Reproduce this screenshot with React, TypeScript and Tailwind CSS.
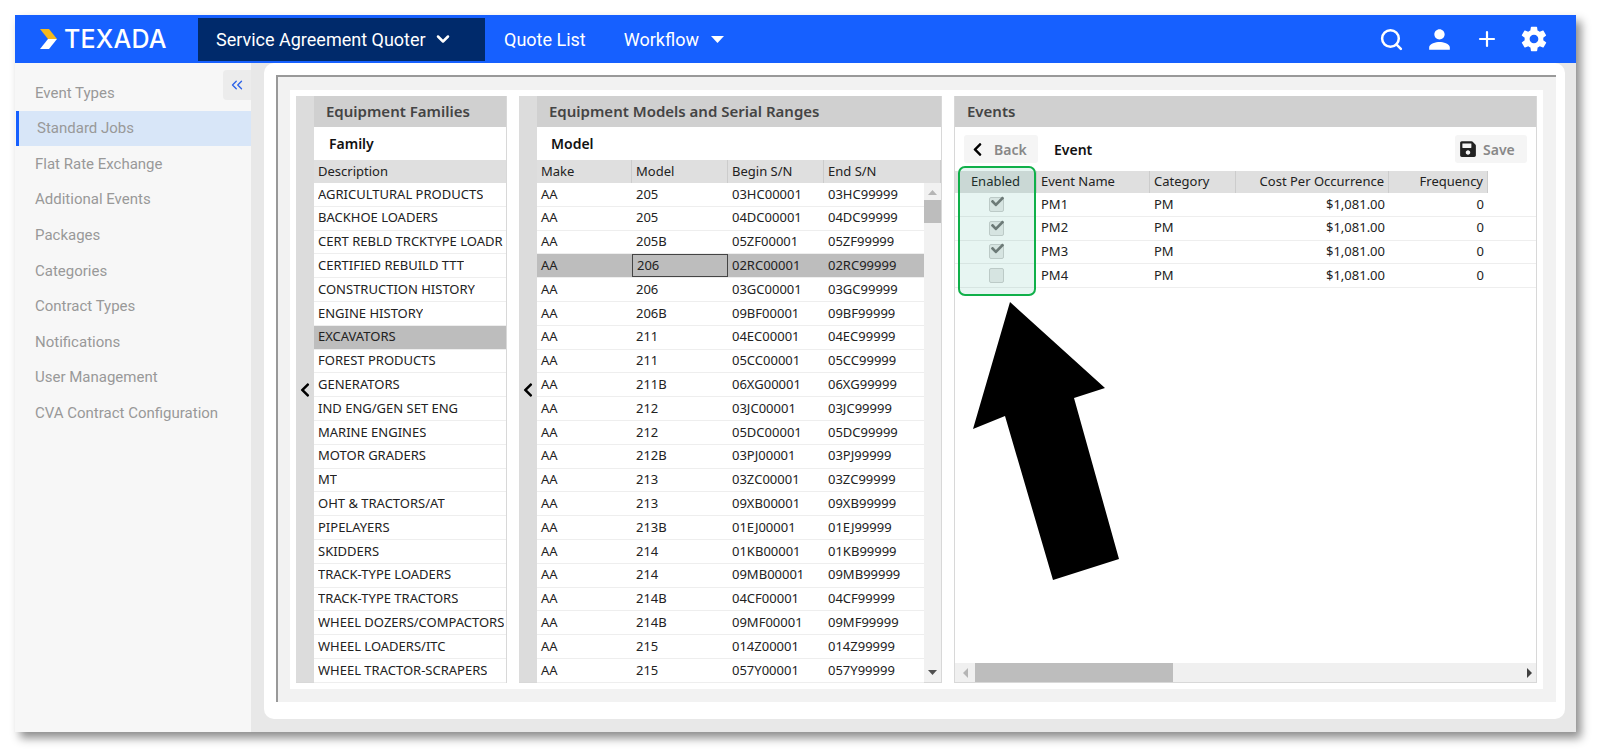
import React from 'react';
import { ChevronDown, ChevronsLeft, Plus, Search } from 'lucide-react';
import { FaCheck, FaChevronLeft, FaSave } from 'react-icons/fa';
import { IoMdSettings } from 'react-icons/io';
import { MdPerson } from 'react-icons/md';

const sideItems = [
  'Event Types',
  'Standard Jobs',
  'Flat Rate Exchange',
  'Additional Events',
  'Packages',
  'Categories',
  'Contract Types',
  'Notifications',
  'User Management',
  'CVA Contract Configuration',
];

const families = [
  'AGRICULTURAL PRODUCTS',
  'BACKHOE LOADERS',
  'CERT REBLD TRCKTYPE LOADR',
  'CERTIFIED REBUILD TTT',
  'CONSTRUCTION HISTORY',
  'ENGINE HISTORY',
  'EXCAVATORS',
  'FOREST PRODUCTS',
  'GENERATORS',
  'IND ENG/GEN SET ENG',
  'MARINE ENGINES',
  'MOTOR GRADERS',
  'MT',
  'OHT & TRACTORS/AT',
  'PIPELAYERS',
  'SKIDDERS',
  'TRACK-TYPE LOADERS',
  'TRACK-TYPE TRACTORS',
  'WHEEL DOZERS/COMPACTORS',
  'WHEEL LOADERS/ITC',
  'WHEEL TRACTOR-SCRAPERS',
];

const models = [
  ['205', '03HC'],
  ['205', '04DC'],
  ['205B', '05ZF'],
  ['206', '02RC'],
  ['206', '03GC'],
  ['206B', '09BF'],
  ['211', '04EC'],
  ['211', '05CC'],
  ['211B', '06XG'],
  ['212', '03JC'],
  ['212', '05DC'],
  ['212B', '03PJ'],
  ['213', '03ZC'],
  ['213', '09XB'],
  ['213B', '01EJ'],
  ['214', '01KB'],
  ['214', '09MB'],
  ['214B', '04CF'],
  ['214B', '09MF'],
  ['215', '014Z'],
  ['215', '057Y'],
];

const events = [
  { name: 'PM1', on: true },
  { name: 'PM2', on: true },
  { name: 'PM3', on: true },
  { name: 'PM4', on: false },
];

const Gutter = () => (
  <div className="w-[18px] shrink-0 bg-[#dcdcdc] flex items-center justify-center pt-[2px]">
    <FaChevronLeft className="h-[16px] w-[16px] text-black" />
  </div>
);

const PanelTitle = ({ children }: { children: React.ReactNode }) => (
  <div className="h-[31px] shrink-0 bg-[#d0d0d0] flex items-center text-[15px] font-semibold text-[#444444]">
    {children}
  </div>
);

const App: React.FC = () => {
  return (
    <div className="relative w-[1600px] h-[755px] bg-white overflow-hidden font-['Noto_Sans',sans-serif]">
      <div className="absolute left-[15px] top-[15px] w-[1561px] h-[717px] flex flex-col shadow-[5px_6px_9px_rgba(0,0,0,0.45)]">
        {/* Header */}
        <div className="h-[48px] shrink-0 bg-[#1660ff] flex items-center text-white font-['Roboto',sans-serif]">
          <div className="w-[183px] shrink-0 flex items-center pl-[25px] gap-[5px]">
            <svg width="19" height="20" viewBox="0 0 19 20">
              <path d="M0 0H9L17 10H8Z" fill="#f5b81c" />
              <path d="M8 10H17L9 20H0Z" fill="#ffffff" />
            </svg>
            <span className="text-[25px] font-medium leading-none font-['Inter',sans-serif] tracking-[0.2px]">TEXADA</span>
          </div>
          <div className="h-[43px] w-[287px] shrink-0 bg-[#002a6b] flex items-center pl-[18px] gap-[7px] text-[18px]">
            Service Agreement Quoter
            <ChevronDown className="h-[20px] w-[20px]" strokeWidth={3} />
          </div>
          <div className="ml-[19px] text-[18px]">Quote List</div>
          <div className="ml-[38px] text-[18px] flex items-center gap-[12px]">
            Workflow
            <svg width="13" height="7" viewBox="0 0 13 7">
              <path d="M0 0H13L6.5 7Z" fill="#ffffff" />
            </svg>
          </div>
          <div className="ml-auto flex items-center mr-[27px] gap-[20px]">
            <Search className="h-[25px] w-[25px]" strokeWidth={2.4} />
            <MdPerson className="h-[31px] w-[31px]" />
            <Plus className="h-[24px] w-[24px]" strokeWidth={2.2} />
            <IoMdSettings className="h-[30px] w-[30px]" />
          </div>
        </div>

        <div className="flex-1 flex min-h-0">
          {/* Sidebar */}
          <div className="relative w-[236px] shrink-0 bg-[#f7f7f7] pt-[12px] font-['Roboto',sans-serif] text-[15px] text-[#999999]">
            <button className="absolute right-0 top-[7px] w-[28px] h-[30px] rounded-l-[4px] bg-[#ececec] flex items-center justify-center">
              <ChevronsLeft className="h-[18px] w-[18px] text-[#2c62e8]" strokeWidth={1.8} />
            </button>
            {sideItems.map((item) =>
              item === 'Standard Jobs' ? (
                <div
                  key={item}
                  className="h-[35.6px] ml-[1px] border-l-[3px] border-[#1660ff] bg-[#d8e6f8] flex items-center pl-[18px]"
                >
                  {item}
                </div>
              ) : (
                <div key={item} className="h-[35.6px] flex items-center pl-[20px]">
                  {item}
                </div>
              ),
            )}
          </div>

          {/* Main */}
          <div className="flex-1 min-w-0 bg-[#e8e8e8] pl-[13px] pr-[11px] pb-[13px]">
            <div className="h-full rounded-[10px] bg-white pl-[12px] pr-[9px] pt-[12px] pb-[17px]">
              <div className="h-full border-t-2 border-l-2 border-[#999999] bg-[#f2f2f2] pl-[12px] pr-[13px] pt-[13px] pb-[13px]">
                <div className="h-full bg-white p-[6px] flex gap-[12px] text-[13px] text-[#222222]">
                  {/* Families */}
                  <div className="w-[211px] shrink-0 flex border-b border-r border-[#d8d8d8]">
                    <Gutter />
                    <div className="flex-1 min-w-0 flex flex-col">
                      <PanelTitle>
                        <span className="pl-[12px]">Equipment Families</span>
                      </PanelTitle>
                      <div className="h-[33px] shrink-0 flex items-center pl-[15px] text-[14px] font-semibold text-[#111111]">Family</div>
                      <div className="h-[23px] shrink-0 bg-[#dfdfdf] flex items-center pl-[4px]">Description</div>
                      {families.map((f) => (
                        <div
                          key={f}
                          className={`h-[23.8px] shrink-0 flex items-center pl-[4px] border-b border-[#eeeeee] ${f === 'EXCAVATORS' ? 'bg-[#bdbdbd]' : ''}`}
                        >
                          <span className="truncate">{f}</span>
                        </div>
                      ))}
                    </div>
                  </div>

                  {/* Models */}
                  <div className="w-[423px] shrink-0 flex border-b border-r border-[#d8d8d8]">
                    <Gutter />
                    <div className="flex-1 min-w-0 flex flex-col">
                      <PanelTitle>
                        <span className="pl-[12px]">Equipment Models and Serial Ranges</span>
                      </PanelTitle>
                      <div className="h-[33px] shrink-0 flex items-center pl-[14px] text-[14px] font-semibold text-[#111111]">Model</div>
                      <div className="h-[23px] shrink-0 bg-[#dfdfdf] grid grid-cols-[95px_96px_96px_1fr] items-stretch">
                        {['Make', 'Model', 'Begin S/N', 'End S/N'].map((h) => (
                          <div key={h} className="flex items-center pl-[4px] border-r border-[#cccccc]">{h}</div>
                        ))}
                      </div>
                      <div className="flex-1 min-h-0 flex">
                        <div className="flex-1 min-w-0">
                          {models.map(([model, serial], i) => (
                            <div
                              key={i}
                              className={`h-[23.8px] grid grid-cols-[95px_96px_96px_1fr] items-stretch border-b border-[#eeeeee] ${i === 3 ? 'bg-[#bdbdbd]' : ''}`}
                            >
                              <div className="flex items-center pl-[4px]">AA</div>
                              <div className={`flex items-center pl-[4px] ${i === 3 ? 'border border-[#444444]' : ''}`}>{model}</div>
                              <div className="flex items-center pl-[4px]">{serial}00001</div>
                              <div className="flex items-center pl-[4px]">{serial}99999</div>
                            </div>
                          ))}
                        </div>
                        <div className="w-[17px] shrink-0 bg-[#f1f1f1] flex flex-col items-center">
                          <svg className="mt-[7px]" width="9" height="5" viewBox="0 0 9 5"><path d="M0 5H9L4.5 0Z" fill="#b5b5b5" /></svg>
                          <div className="mt-[5px] w-full h-[23px] bg-[#bdbdbd]" />
                          <svg className="mt-auto mb-[7px]" width="9" height="5" viewBox="0 0 9 5"><path d="M0 0H9L4.5 5Z" fill="#505050" /></svg>
                        </div>
                      </div>
                    </div>
                  </div>

                  {/* Events */}
                  <div className="flex-1 min-w-0 flex flex-col border border-t-0 border-[#d8d8d8]">
                    <PanelTitle>
                      <span className="pl-[12px]">Events</span>
                    </PanelTitle>
                    <div className="h-[44px] shrink-0 flex items-center pl-[9px] pr-[9px]">
                      <div className="h-[28px] w-[74px] rounded-[3px] bg-[#f5f5f5] flex items-center pl-[6px] gap-[9px] text-[14px] font-semibold text-[#888888]">
                        <FaChevronLeft className="h-[15px] w-[15px] text-black" />
                        Back
                      </div>
                      <div className="ml-[16px] text-[14px] font-semibold text-[#111111]">Event</div>
                      <div className="ml-auto h-[28px] w-[72px] rounded-[3px] bg-[#f5f5f5] flex items-center pl-[4px] gap-[6px] text-[14px] font-semibold text-[#888888]">
                        <FaSave className="h-[18px] w-[18px] text-[#222222]" />
                        Save
                      </div>
                    </div>
                    <div className="h-[22px] shrink-0 bg-[#dfdfdf] grid grid-cols-[82px_113px_86px_153px_99px_1fr] items-stretch">
                      <div className="flex items-center justify-center border-r border-[#cccccc]">Enabled</div>
                      <div className="flex items-center pl-[4px] border-r border-[#cccccc]">Event Name</div>
                      <div className="flex items-center pl-[4px] border-r border-[#cccccc]">Category</div>
                      <div className="flex items-center justify-end pr-[4px] border-r border-[#cccccc]">Cost Per Occurrence</div>
                      <div className="flex items-center justify-end pr-[4px] border-r border-[#cccccc]">Frequency</div>
                      <div className="bg-white" />
                    </div>
                    <div className="flex-1 min-h-0">
                      {events.map((e) => (
                        <div key={e.name} className="h-[23.8px] grid grid-cols-[82px_113px_86px_153px_99px_1fr] items-stretch border-b border-[#eeeeee]">
                          <div className="flex items-center justify-center">
                            <div className="relative h-[15px] w-[15px] rounded-[2px] border border-[#d0d0d0] bg-[#ececec]">
                              {e.on && <FaCheck className="absolute left-[1px] -top-[3px] h-[13px] w-[13px] text-[#777777]" />}
                            </div>
                          </div>
                          <div className="flex items-center pl-[4px]">{e.name}</div>
                          <div className="flex items-center pl-[4px]">PM</div>
                          <div className="flex items-center justify-end pr-[4px]">$1,081.00</div>
                          <div className="flex items-center justify-end pr-[4px]">0</div>
                          <div />
                        </div>
                      ))}
                    </div>
                    <div className="h-[19px] shrink-0 bg-[#f0f0f0] flex items-center">
                      <div className="w-[20px] flex justify-center">
                        <svg width="5" height="10" viewBox="0 0 5 10"><path d="M5 0V10L0 5Z" fill="#b5b5b5" /></svg>
                      </div>
                      <div className="w-[198px] h-full bg-[#bdbdbd]" />
                      <div className="ml-auto w-[14px] flex justify-center">
                        <svg width="5" height="10" viewBox="0 0 5 10"><path d="M0 0V10L5 5Z" fill="#404040" /></svg>
                      </div>
                    </div>
                  </div>
                </div>
              </div>
            </div>
          </div>
        </div>
      </div>

      {/* Highlight box and arrow drawn over the screenshot */}
      <div className="absolute left-[958px] top-[166px] w-[78px] h-[130px] rounded-[7px] border-[2.5px] border-[#10b04a] bg-[#0f9d80]/10" />
      <svg className="absolute left-0 top-0 pointer-events-none" width="1600" height="755" viewBox="0 0 1600 755">
        <path d="M1010 302L1105 388L1074 398L1119 559L1053 580L1005 416L973 429Z" fill="#000000" />
      </svg>
    </div>
  );
};

export default App;
